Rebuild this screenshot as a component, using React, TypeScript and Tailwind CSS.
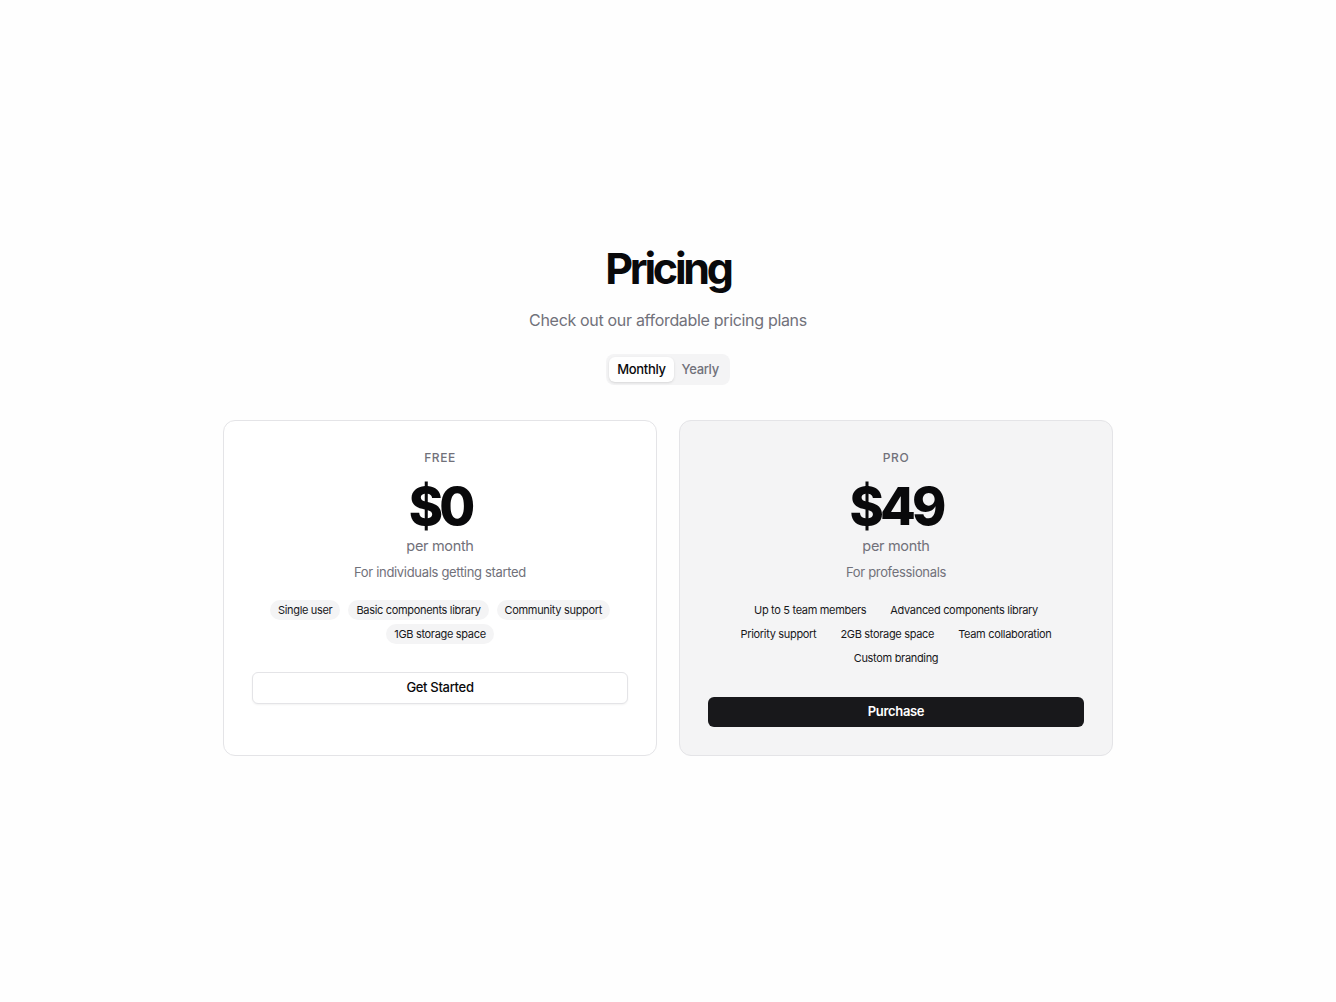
import React, { useState } from 'react';

interface Plan {
  name: string;
  price: string;
  description: string;
  features: string[];
  cta: string;
  highlighted?: boolean;
}

const plans: Plan[] = [
  {
    name: 'Free',
    price: '$0',
    description: 'For individuals getting started',
    features: ['Single user', 'Basic components library', 'Community support', '1GB storage space'],
    cta: 'Get Started',
  },
  {
    name: 'Pro',
    price: '$49',
    description: 'For professionals',
    features: [
      'Up to 5 team members',
      'Advanced components library',
      'Priority support',
      '2GB storage space',
      'Team collaboration',
      'Custom branding',
    ],
    cta: 'Purchase',
    highlighted: true,
  },
];

const PlanCard: React.FC<{ plan: Plan }> = ({ plan }) => (
  <div
    className={`flex flex-col items-center rounded-xl border border-[#e4e4e7] px-7 pt-[29px] pb-7 ${
      plan.highlighted ? 'bg-[#f4f4f5]' : 'bg-white'
    }`}
  >
    <div className="text-[12px] leading-4 font-medium uppercase tracking-wider text-[#71717a]">{plan.name}</div>
    <div className="mt-[14px] text-[52px] leading-[54px] font-extrabold tracking-[-0.075em] text-[#09090b]">
      {plan.price}
    </div>
    <div className="text-[14.5px] leading-6 text-[#71717a]">per month</div>
    <div className="mt-1 text-[13px] leading-5 text-[#71717a]">{plan.description}</div>
    <div className="mt-[18px] flex flex-wrap justify-center gap-x-2 gap-y-1 px-2">
      {plan.features.map(f => (
        <span key={f} className="rounded-full bg-[#f4f4f5] px-2 py-0.5 text-[11px] leading-4 text-[#18181b]">
          {f}
        </span>
      ))}
    </div>
    {plan.highlighted ? (
      <button className="mt-[29px] h-[30px] w-full rounded-md bg-[#18181b] text-[13px] font-semibold text-white">
        {plan.cta}
      </button>
    ) : (
      <button className="mt-[28px] h-8 w-full rounded-md border border-[#e4e4e7] bg-white text-[13px] font-medium text-[#09090b] shadow-xs">
        {plan.cta}
      </button>
    )}
  </div>
);

export default function App() {
  const [period, setPeriod] = useState<'monthly' | 'yearly'>('monthly');

  return (
    <div
      className="flex min-h-screen items-center justify-center bg-[#fefefe] pb-[2px] tracking-[-0.02em] text-[#09090b]"
      style={{ fontFamily: 'Inter, "Noto Sans", sans-serif' }}
    >
      <div className="flex w-[890px] flex-col items-center">
        <h1 className="text-[43px] leading-[48px] font-bold tracking-[-0.075em]">Pricing</h1>
        <p className="mt-4 text-base leading-6 text-[#71717a]">Check out our affordable pricing plans</p>
        <div className="mt-[22px] flex rounded-lg bg-[#f4f4f5] p-[3px]">
          <button
            onClick={() => setPeriod('monthly')}
            className={`rounded-md px-[8px] py-[4px] text-[13px] leading-[17px] font-medium ${
              period === 'monthly' ? 'bg-white text-[#09090b] shadow-sm' : 'text-[#71717a]'
            }`}
          >
            Monthly
          </button>
          <button
            onClick={() => setPeriod('yearly')}
            className={`rounded-md px-[8px] py-[4px] text-[13px] leading-[17px] font-medium ${
              period === 'yearly' ? 'bg-white text-[#09090b] shadow-sm' : 'text-[#71717a]'
            }`}
          >
            Yearly
          </button>
        </div>
        <div className="mt-[35px] grid w-full grid-cols-2 gap-[22px]">
          {plans.map(p => (
            <PlanCard key={p.name} plan={p} />
          ))}
        </div>
      </div>
    </div>
  );
}
